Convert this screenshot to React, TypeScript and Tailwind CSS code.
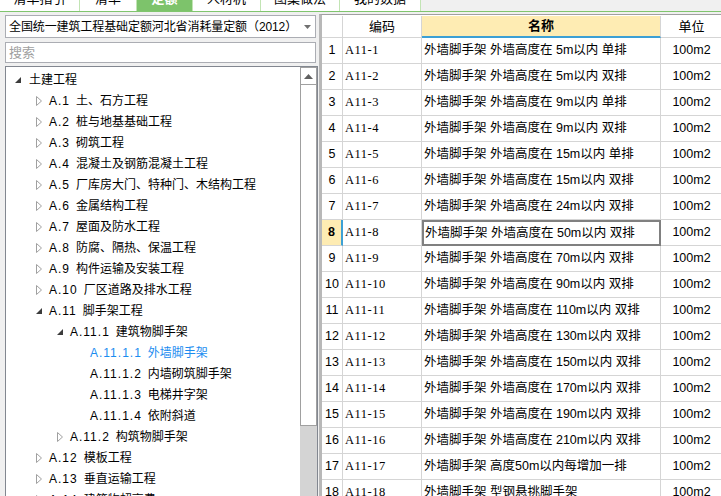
import React from "react";

const tabs = [
  { label: "清单指引", w: "w-[80px]" },
  { label: "清单", w: "w-[57px]" },
  { label: "定额", w: "w-[56px]", active: true },
  { label: "人材机", w: "w-[68px]" },
  { label: "图集做法", w: "w-[79px]" },
  { label: "我的数据", w: "w-[81px]" },
];

type Node = { code?: string; name: string; level: number; icon: "open" | "closed" | "none"; active?: boolean };

const tree: Node[] = [
  { name: "土建工程", level: 0, icon: "open" },
  { code: "A.1", name: "土、石方工程", level: 1, icon: "closed" },
  { code: "A.2", name: "桩与地基基础工程", level: 1, icon: "closed" },
  { code: "A.3", name: "砌筑工程", level: 1, icon: "closed" },
  { code: "A.4", name: "混凝土及钢筋混凝土工程", level: 1, icon: "closed" },
  { code: "A.5", name: "厂库房大门、特种门、木结构工程", level: 1, icon: "closed" },
  { code: "A.6", name: "金属结构工程", level: 1, icon: "closed" },
  { code: "A.7", name: "屋面及防水工程", level: 1, icon: "closed" },
  { code: "A.8", name: "防腐、隔热、保温工程", level: 1, icon: "closed" },
  { code: "A.9", name: "构件运输及安装工程", level: 1, icon: "closed" },
  { code: "A.10", name: "厂区道路及排水工程", level: 1, icon: "closed" },
  { code: "A.11", name: "脚手架工程", level: 1, icon: "open" },
  { code: "A.11.1", name: "建筑物脚手架", level: 2, icon: "open" },
  { code: "A.11.1.1", name: "外墙脚手架", level: 3, icon: "none", active: true },
  { code: "A.11.1.2", name: "内墙砌筑脚手架", level: 3, icon: "none" },
  { code: "A.11.1.3", name: "电梯井字架", level: 3, icon: "none" },
  { code: "A.11.1.4", name: "依附斜道", level: 3, icon: "none" },
  { code: "A.11.2", name: "构筑物脚手架", level: 2, icon: "closed" },
  { code: "A.12", name: "模板工程", level: 1, icon: "closed" },
  { code: "A.13", name: "垂直运输工程", level: 1, icon: "closed" },
  { code: "A.14", name: "建筑物超高费", level: 1, icon: "closed" },
];

const indent = ["pl-[9px]", "pl-[30px]", "pl-[51px]", "pl-[84px]"];

const rows = [
  ["A11-1", "外墙脚手架 外墙高度在 5m以内 单排"],
  ["A11-2", "外墙脚手架 外墙高度在 5m以内 双排"],
  ["A11-3", "外墙脚手架 外墙高度在 9m以内 单排"],
  ["A11-4", "外墙脚手架 外墙高度在 9m以内 双排"],
  ["A11-5", "外墙脚手架 外墙高度在 15m以内 单排"],
  ["A11-6", "外墙脚手架 外墙高度在 15m以内 双排"],
  ["A11-7", "外墙脚手架 外墙高度在 24m以内 双排"],
  ["A11-8", "外墙脚手架 外墙高度在 50m以内 双排"],
  ["A11-9", "外墙脚手架 外墙高度在 70m以内 双排"],
  ["A11-10", "外墙脚手架 外墙高度在 90m以内 双排"],
  ["A11-11", "外墙脚手架 外墙高度在 110m以内 双排"],
  ["A11-12", "外墙脚手架 外墙高度在 130m以内 双排"],
  ["A11-13", "外墙脚手架 外墙高度在 150m以内 双排"],
  ["A11-14", "外墙脚手架 外墙高度在 170m以内 双排"],
  ["A11-15", "外墙脚手架 外墙高度在 190m以内 双排"],
  ["A11-16", "外墙脚手架 外墙高度在 210m以内 双排"],
  ["A11-17", "外墙脚手架 高度50m以内每增加一排"],
  ["A11-18", "外墙脚手架 型钢悬挑脚手架"],
];

function TreeIcon({ kind }: { kind: Node["icon"] }) {
  if (kind === "open")
    return (
      <svg width="6" height="6" viewBox="0 0 6 6" className="shrink-0">
        <polygon points="6,0 6,6 0,6" fill="#3c3c3c" />
      </svg>
    );
  if (kind === "closed")
    return (
      <svg width="6" height="10" viewBox="0 0 6 10" className="shrink-0">
        <polygon points="0.5,0.5 5.5,5 0.5,9.5" fill="white" stroke="#a0a0a0" />
      </svg>
    );
  return null;
}

export default function App() {
  return (
    <div className="w-[721px] h-[496px] overflow-hidden bg-[#f0f0f0] text-[12px] text-black font-['Liberation_Sans','Noto_Sans_CJK_SC',sans-serif] flex flex-col">
      {/* tabs, mostly scrolled off the top */}
      <div className="h-[11px] shrink-0 overflow-hidden">
        <div className="flex -mt-[13px] h-[24px]">
          {tabs.map((t) => (
            <div
              key={t.label}
              className={`${t.w} h-full flex items-center justify-center border-r border-[#c2e4b4] text-[13px] ${
                t.active ? "bg-[#7dc36b] text-white font-bold" : "bg-white"
              }`}
            >
              {t.label}
            </div>
          ))}
        </div>
      </div>
      <div className="h-px shrink-0 bg-[#80c56e]" />

      <div className="flex flex-1 min-h-0">
        {/* left panel */}
        <div className="w-[319px] shrink-0 flex flex-col pl-[5px] pr-[1px]">
          <div className="mt-[3px] mr-[2px] h-[23px] bg-white border border-[#abadb3] flex items-center pl-[3px] pr-[4px]">
            <span className="flex-1 whitespace-nowrap overflow-hidden text-[12px] tracking-[-0.1px]">
              全国统一建筑工程基础定额河北省消耗量定额（2012）
            </span>
            <svg width="7" height="4" viewBox="0 0 7 4" className="shrink-0">
              <polygon points="0,0 7,0 3.5,4" fill="#707070" />
            </svg>
          </div>
          <div className="mt-[4px] mr-[2px] h-[21px] bg-white border border-[#abadb3] flex items-center pl-[3px] text-[#a0a0a0] text-[13px]">
            搜索
          </div>
          <div className="mt-[3px] flex-1 min-h-0 bg-white border border-[#828790] border-b-0 flex">
            <div className="flex-1 min-w-0 pt-[2px]">
              {tree.map((n, i) => (
                <div key={i} className={`h-[21px] flex items-center whitespace-nowrap ${indent[n.level]}`}>
                  {n.icon !== "none" && (
                    <span className={`w-[6px] flex justify-center ${n.level === 0 ? "mr-[8px]" : "mr-[7px]"}`}>
                      <TreeIcon kind={n.icon} />
                    </span>
                  )}
                  <span className={n.active ? "text-[#1a8cf0]" : ""}>
                    {n.code && <span className="mr-[6px] tracking-[1px]">{n.code}</span>}
                    {n.name}
                  </span>
                </div>
              ))}
            </div>
            <div className="w-[17px] shrink-0 flex flex-col bg-[#d4d4d4]">
              <div className="h-[18px] bg-white border border-[#a0a0a0] flex items-center justify-center">
                <svg width="9" height="5" viewBox="0 0 9 5">
                  <polygon points="0,5 9,5 4.5,0" fill="#606060" />
                </svg>
              </div>
              <div className="h-[341px] bg-white border border-t-0 border-[#a0a0a0]" />
            </div>
          </div>
        </div>

        {/* right panel */}
        <div className="flex-1 min-w-0 pt-[2px] flex flex-col">
          <div className="flex-1 flex flex-col border-t border-l-[3px] border-[#a0a0a0] border-l-[#b8b8b8] bg-white">
            <div className="h-px bg-white" />
            <div className="h-[22px] flex shrink-0 text-[13px]">
              <div className="w-[21px] shrink-0 border-r border-b border-[#d5d5d5]" />
              <div className="w-[79px] shrink-0 border-r border-b border-[#d5d5d5] flex items-center justify-center">编码</div>
              <div className="w-[239px] shrink-0 bg-[#feecb3] border-r border-[#d5d5d5] border-b-[2px] border-b-[#3ca0d5] flex items-center justify-center font-bold">
                名称
              </div>
              <div className="w-[61px] shrink-0 border-b border-[#d5d5d5] flex items-center justify-center">单位</div>
            </div>
            {rows.map(([code, name], i) => {
              const sel = i === 7;
              return (
                <div key={code} className="h-[26px] flex shrink-0 text-[12.5px]">
                  <div
                    className={`w-[21px] shrink-0 border-r border-b border-[#d5d5d5] flex items-center justify-center ${
                      sel ? "bg-[#feecb3] font-bold border-r-[2px] border-r-[#3ca0d5]" : ""
                    }`}
                  >
                    {i + 1}
                  </div>
                  <div className="w-[79px] shrink-0 border-r border-b border-[#d5d5d5] flex items-center pl-[2px] font-['Liberation_Serif',serif] tracking-[0.5px]">
                    {code}
                  </div>
                  <div
                    className={`w-[239px] shrink-0 flex items-center whitespace-nowrap ${
                      sel ? "border-2 border-[#808080] pl-[1px]" : "border-r border-b border-[#d5d5d5] pl-[2px]"
                    }`}
                  >
                    {name}
                  </div>
                  <div className="w-[61px] shrink-0 border-b border-[#d5d5d5] flex items-center justify-center">100m2</div>
                </div>
              );
            })}
          </div>
        </div>
      </div>
    </div>
  );
}
